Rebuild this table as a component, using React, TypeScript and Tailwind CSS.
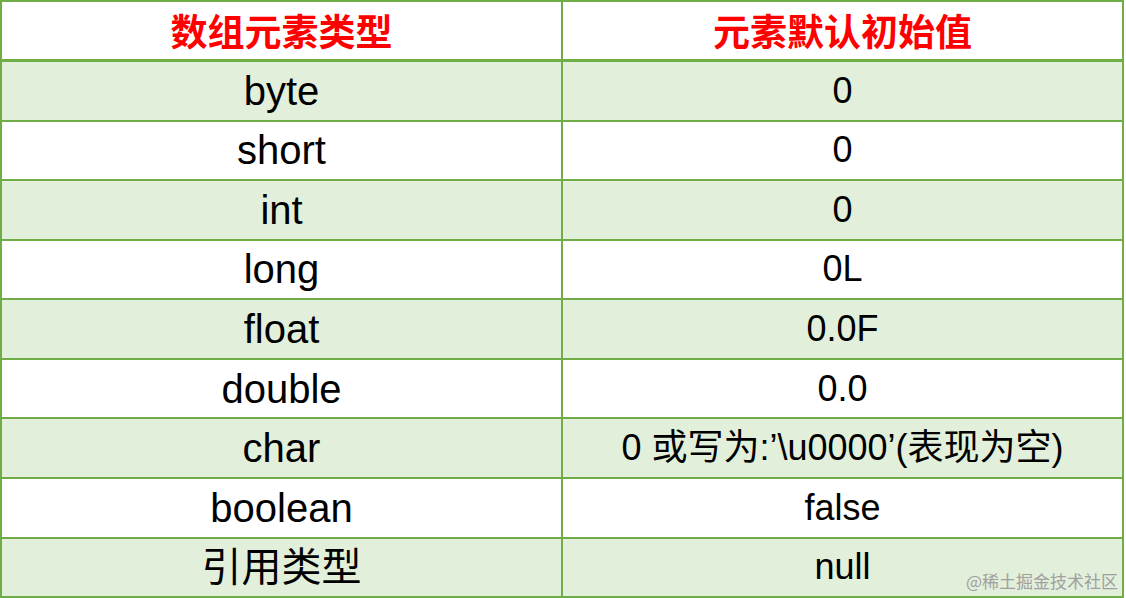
import React from "react";

const rows: [string, string][] = [
  ["byte", "0"],
  ["short", "0"],
  ["int", "0"],
  ["long", "0L"],
  ["float", "0.0F"],
  ["double", "0.0"],
  ["char", "0 或写为:’\\u0000’(表现为空)"],
  ["boolean", "false"],
  ["引用类型", "null"],
];

const font = { fontFamily: '"Liberation Sans", "Noto Sans CJK SC", sans-serif' };

export default function App() {
  return (
    <div className="w-[1126px] h-[598px] bg-white overflow-hidden relative" style={font}>
      <div className="w-[1124px] h-[598px] bg-[#70ad47] flex flex-col gap-[2px] p-[2px]">
        <div className="grid grid-cols-[559px_1fr] gap-[2px] h-[57px] mb-[1px]">
          <div className="bg-white flex items-center justify-center text-[37px] font-bold text-[#ff0000] leading-none" style={{ fontFamily: '"Noto Sans CJK SC", sans-serif' }}>
            数组元素类型
          </div>
          <div className="bg-white flex items-center justify-center text-[37px] font-bold text-[#ff0000] leading-none" style={{ fontFamily: '"Noto Sans CJK SC", sans-serif' }}>
            元素默认初始值
          </div>
        </div>
        {rows.map(([a, b], i) => (
          <div key={i} className="grid grid-cols-[559px_1fr] gap-[2px] flex-1">
            <div className={`${i % 2 === 0 ? "bg-[#e2efda]" : "bg-white"} flex items-center justify-center text-[40px] text-black leading-none`}>
              {a}
            </div>
            <div className={`${i % 2 === 0 ? "bg-[#e2efda]" : "bg-white"} flex items-center justify-center text-[36px] text-black leading-none`}>
              {b}
            </div>
          </div>
        ))}
      </div>
      <div className="absolute right-[8px] bottom-[9px] text-[17px] text-[#a0a0a0] leading-none" style={{ fontFamily: '"Noto Sans CJK SC", sans-serif' }}>
        @稀土掘金技术社区
      </div>
    </div>
  );
}
